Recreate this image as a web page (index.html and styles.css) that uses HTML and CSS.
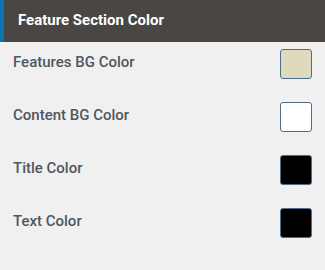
FILE: index.html
```html
<!DOCTYPE html>
<html lang="en">
<head>
    <meta charset="UTF-8">
    <meta name="viewport" content="width=device-width, initial-scale=1.0">
    <title>Feature Section Color</title>
    <link rel="stylesheet" href="styles.css">
</head>
<body>
    <div class="panel">
        <h2 class="panel-title">Feature Section Color</h2>

        <div class="color-list">
            <div class="color-row">
                <span class="color-label">Features BG Color</span>
                <span class="swatch" style="background: #dedabd;"></span>
            </div>
            <div class="color-row">
                <span class="color-label">Content BG Color</span>
                <span class="swatch" style="background: #ffffff;"></span>
            </div>
            <div class="color-row">
                <span class="color-label">Title Color</span>
                <span class="swatch" style="background: #000000;"></span>
            </div>
            <div class="color-row">
                <span class="color-label">Text Color</span>
                <span class="swatch" style="background: #000000;"></span>
            </div>
        </div>
    </div>
</body>
</html>
```

FILE: styles.css
```css
* {
    margin: 0;
    padding: 0;
    box-sizing: border-box;
}

body {
    background: #f0f0f0;
    font-family: Roboto, 'Liberation Sans', sans-serif;
}

.panel-title {
    height: 42px;
    padding: 11px 0 0 14px;
    background: #4a4644;
    border-left: 4px solid #0a74b0;
    color: #fff;
    font-size: 15px;
    font-weight: 700;
    line-height: 18px;
}

.color-list {
    display: flex;
    flex-direction: column;
    gap: 23px;
    padding: 7px 13px 0 13px;
}

.color-row {
    display: flex;
    justify-content: space-between;
    align-items: flex-start;
    height: 30px;
}

.color-label {
    padding-top: 4px;
    color: #50575e;
    font-size: 15px;
    font-weight: 500;
    line-height: 18px;
}

.swatch {
    width: 32px;
    height: 30px;
    border: 1px solid #4f6d8c;
    border-radius: 3px;
}
```
